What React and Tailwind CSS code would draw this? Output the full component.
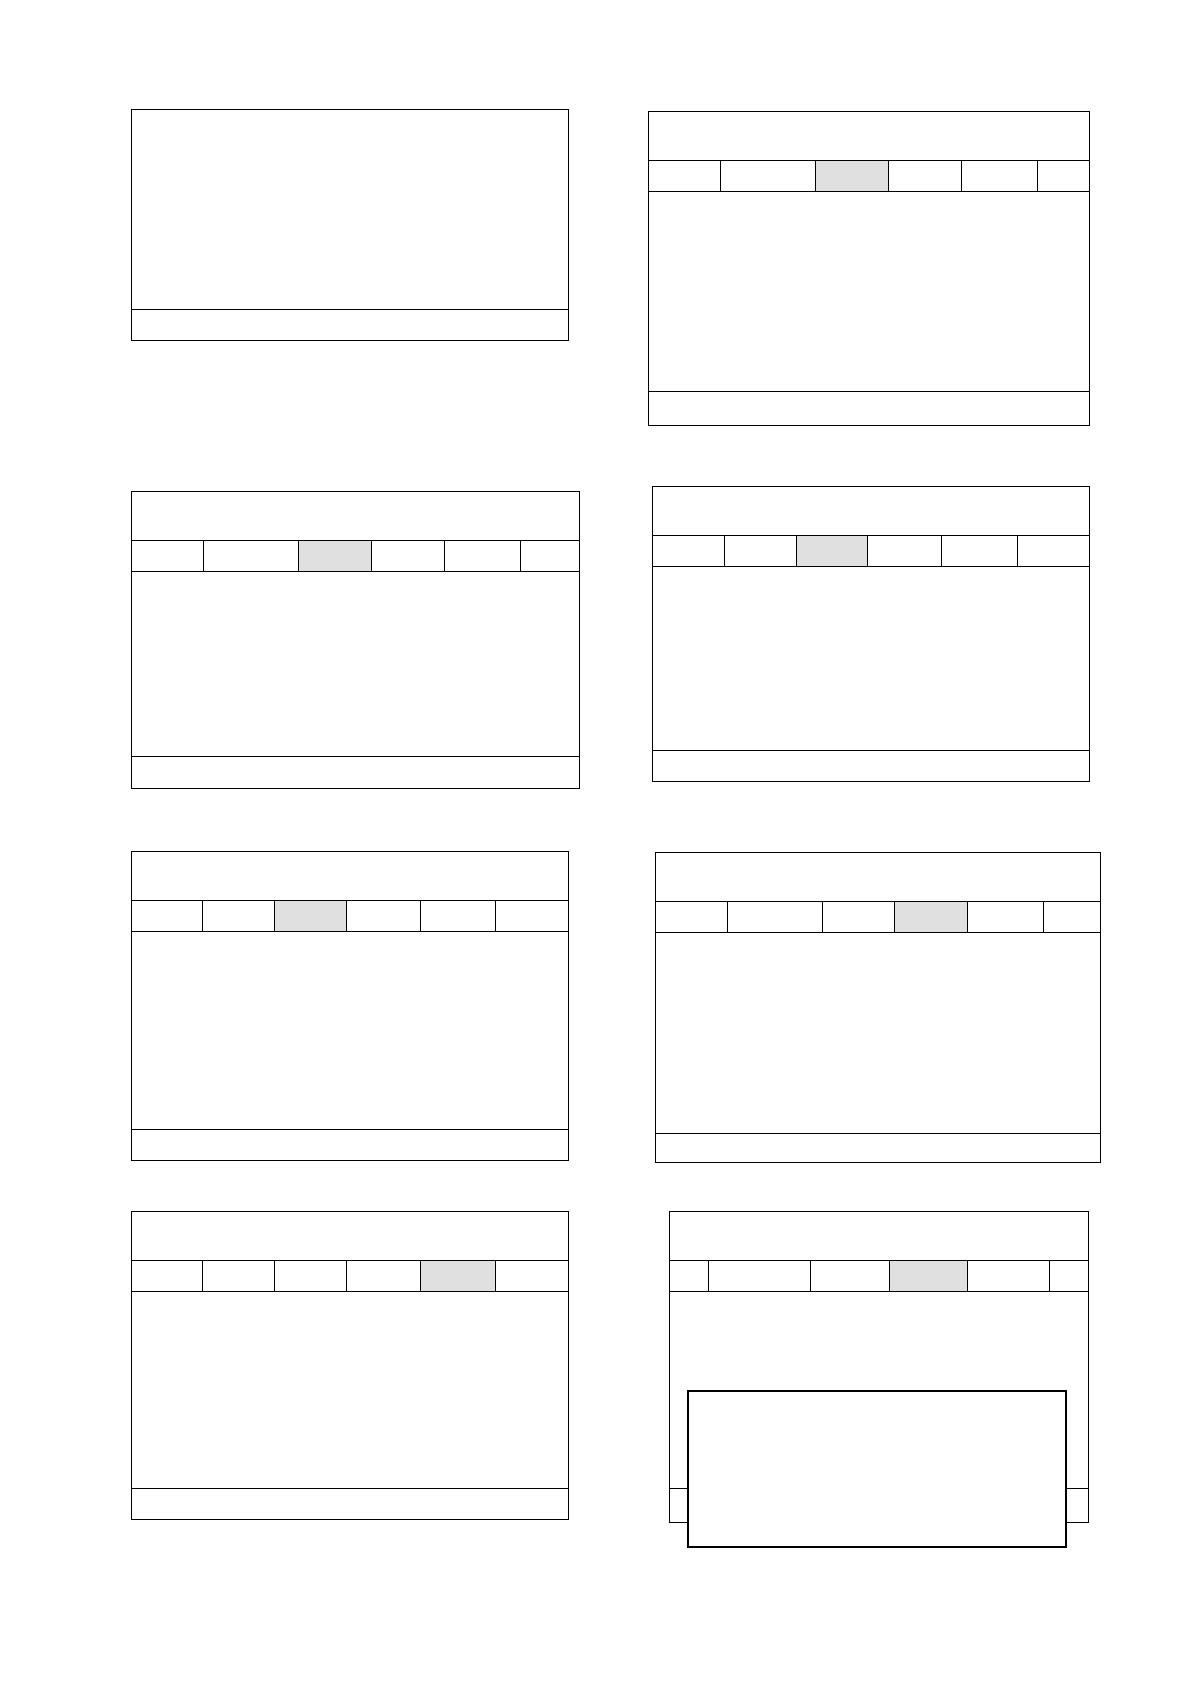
import React from 'react';

const Tabs = ({ tabs }) => (
    <div className="flex h-[32px] border-y border-black">
        {tabs.map((tab, i) => (
            <div
                key={i}
                className={`${tab.w} ${i < tabs.length - 1 ? 'border-r border-black' : ''} ${tab.active ? 'bg-[#e0e0e0]' : 'bg-white'}`}
            />
        ))}
    </div>
);

const Panel = ({ className, tabs, footer = 'h-[31px]', children }) => (
    <div className={`relative shrink-0 flex flex-col border border-black bg-white ${className}`}>
        {tabs && <div className="h-[48px]" />}
        {tabs && <Tabs tabs={tabs} />}
        <div className="flex-1" />
        <div className={`border-t border-black ${footer}`} />
        {children}
    </div>
);

const tabsA = [
    { w: 'w-[72px]' },
    { w: 'w-[95px]' },
    { w: 'w-[73px]', active: true },
    { w: 'w-[73px]' },
    { w: 'w-[76px]' },
    { w: 'flex-1' },
];

const tabsB = [
    { w: 'w-[72px]' },
    { w: 'w-[72px]' },
    { w: 'w-[71px]', active: true },
    { w: 'w-[74px]' },
    { w: 'w-[76px]' },
    { w: 'flex-1' },
];

const tabsC = [
    { w: 'w-[71px]' },
    { w: 'w-[72px]' },
    { w: 'w-[72px]', active: true },
    { w: 'w-[74px]' },
    { w: 'w-[75px]' },
    { w: 'flex-1' },
];

const tabsD = [
    { w: 'w-[72px]' },
    { w: 'w-[95px]' },
    { w: 'w-[72px]' },
    { w: 'w-[73px]', active: true },
    { w: 'w-[76px]' },
    { w: 'flex-1' },
];

const tabsE = [
    { w: 'w-[71px]' },
    { w: 'w-[72px]' },
    { w: 'w-[72px]' },
    { w: 'w-[74px]' },
    { w: 'w-[75px]', active: true },
    { w: 'flex-1' },
];

const tabsF = [
    { w: 'w-[39px]' },
    { w: 'w-[102px]' },
    { w: 'w-[79px]' },
    { w: 'w-[78px]', active: true },
    { w: 'w-[82px]' },
    { w: 'flex-1' },
];

export default function App() {
    return (
        <div className="w-[1191px] min-h-[1684px] bg-white pt-[109px] font-['Liberation_Sans',sans-serif]">
            {/* row 1 */}
            <div className="flex items-start">
                <Panel className="ml-[131px] w-[438px] h-[232px]" />
                <Panel className="ml-[79px] mt-[2px] w-[442px] h-[315px]" tabs={tabsA} footer="h-[34px]" />
            </div>

            {/* row 2 */}
            <div className="flex items-start mt-[60px]">
                <Panel className="ml-[131px] mt-[5px] w-[449px] h-[298px]" tabs={tabsA} footer="h-[32px]" />
                <Panel className="ml-[72px] w-[438px] h-[296px]" tabs={tabsB} />
            </div>

            {/* row 3 */}
            <div className="flex items-start mt-[62px]">
                <Panel className="ml-[131px] w-[438px] h-[310px]" tabs={tabsC} />
                <Panel className="ml-[86px] mt-[1px] w-[446px] h-[311px]" tabs={tabsD} footer="h-[29px]" />
            </div>

            {/* row 4 */}
            <div className="flex items-start mt-[48px]">
                <Panel className="ml-[131px] w-[438px] h-[309px]" tabs={tabsE} />
                <Panel className="ml-[100px] w-[420px] h-[312px]" tabs={tabsF} footer="h-[34px]">
                    <div className="absolute left-[17px] top-[178px] w-[380px] h-[158px] border-2 border-black bg-white" />
                </Panel>
            </div>
        </div>
    );
}
